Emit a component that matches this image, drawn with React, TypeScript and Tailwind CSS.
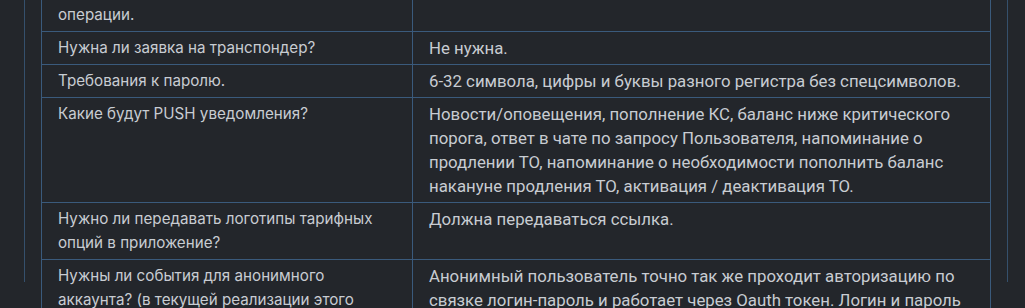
import type { ReactNode } from "react";

const rows: { q: ReactNode; a: string }[] = [
  {
    q: (
      <>
        Что происходит при отмене
        <br />
        операции.
      </>
    ),
    a: "",
  },
  { q: "Нужна ли заявка на транспондер?", a: "Не нужна." },
  {
    q: "Требования к паролю.",
    a: "6-32 символа, цифры и буквы разного регистра без спецсимволов.",
  },
  {
    q: "Какие будут PUSH уведомления?",
    a: "Новости/оповещения, пополнение КС, баланс ниже критического порога, ответ в чате по запросу Пользователя, напоминание о продлении ТО, напоминание о необходимости пополнить баланс накануне продления ТО, активация / деактивация ТО.",
  },
  {
    q: "Нужно ли передавать логотипы тарифных опций в приложение?",
    a: "Должна передаваться ссылка.",
  },
  {
    q: (
      <>
        Нужны ли события для анонимного аккаунта? (в текущей реализации этого
        <br />
        нет)
      </>
    ),
    a: "Анонимный пользователь точно так же проходит авторизацию по связке логин-пароль и работает через Oauth токен. Логин и пароль генерируются автоматически при первом запуске приложения.",
  },
];

export default function App() {
  return (
    <div className="h-[308px] w-[1025px] overflow-hidden bg-[#23262b]">
      <div className="ml-[24px] mr-[17px] h-full border-x border-[#35506c] px-4">
        <table className="-mt-[26px] w-full table-fixed border-collapse">
          <colgroup>
            <col className="w-[371px]" />
            <col />
          </colgroup>
          <tbody>
            {rows.map((r, i) => (
              <tr key={i}>
                <td className="border border-[#3a5a7c] px-4 py-1 align-top font-['Inter',sans-serif] text-[15.2px] leading-6 text-[#c8ccd2]">
                  {r.q}
                </td>
                <td className="border border-[#3a5a7c] px-4 py-1 align-top font-['Roboto',sans-serif] text-[16.8px] leading-6 text-[#c8ccd2]">
                  {r.a}
                </td>
              </tr>
            ))}
          </tbody>
        </table>
      </div>
    </div>
  );
}
